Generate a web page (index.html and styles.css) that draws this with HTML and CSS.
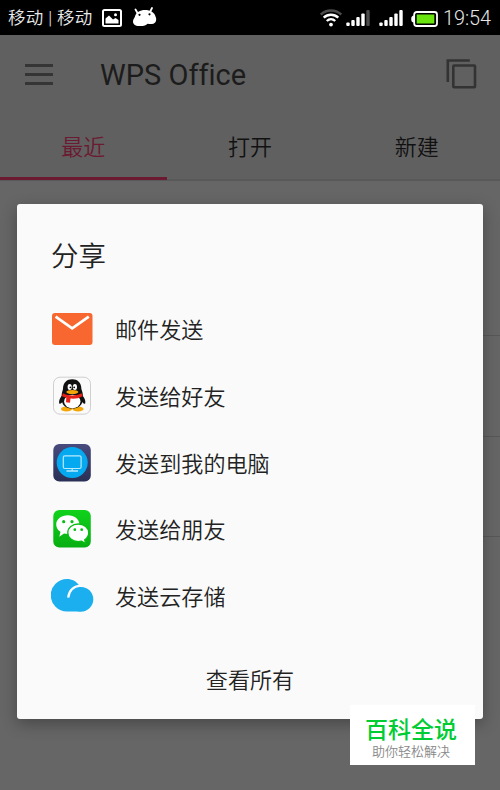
FILE: index.html
```html
<!DOCTYPE html>
<html lang="zh-CN">
<head>
    <meta charset="UTF-8">
    <meta name="viewport" content="width=device-width, initial-scale=1.0">
    <title>WPS Office</title>
    <link rel="stylesheet" href="styles.css">
</head>
<body>
    <div class="status-bar">
        <span class="carrier">移动 | 移动</span>
        <svg class="status-picture" width="20" height="18" viewBox="0 0 20 18">
            <rect x="1" y="1" width="18" height="16" rx="1.5" fill="none" stroke="#fff" stroke-width="2"/>
            <path d="M3.500 14.500V9.500L7 6.500l4 4 2.500-1.500 3 2v3.500z" fill="#fff"/>
            <circle cx="13.500" cy="5.800" r="1.500" fill="#fff"/>
        </svg>
        <svg class="status-robot" width="26" height="20" viewBox="0 0 26 20">
            <path d="M5.500 6 3.500 2.500M18 5l2-4" stroke="#fff" stroke-width="1.800" stroke-linecap="round"/>
            <path d="M2.800 10C4 5 8 3 13 3c5.500 0 9.500 2.500 10.500 6.500 1.500 3 .8 7-3.500 7.500-1.500.2-3 0-4.500-.2C14 18.800 11 19.200 7 19 3 19 1 17 1 14.500c0-1.500.8-3 1.800-4.500z" fill="#fff"/>
            <circle cx="7.500" cy="7.800" r="1.100"/>
            <circle cx="17.500" cy="7.300" r="1.100"/>
        </svg>
        <div class="status-right">
            <svg class="wifi" width="22" height="18" viewBox="0 0 22 18" fill="none" stroke-width="2.400">
                <path d="M.8 5.500C6.500.2 15.500.2 21.200 5.500" stroke="#4b4b4b"/>
                <path d="M3.700 8.600c4.200-3.900 10.400-3.900 14.600 0M6.800 12c2.400-2.300 6-2.300 8.400 0" stroke="#fff"/>
                <circle cx="11" cy="15.600" r="1.900" fill="#fff"/>
            </svg>
            <svg class="signal" width="24" height="18" viewBox="0 0 24 18" fill="#fff">
                <rect x=".3" y="13.500" width="3.400" height="3.500" rx="1"/>
                <rect x="5.300" y="11" width="3.400" height="6" rx="1"/>
                <rect x="10.300" y="8" width="3.400" height="9" rx="1"/>
                <rect x="15.300" y="4.500" width="3.400" height="12.500" rx="1"/>
                <rect x="20.300" y="1" width="3.400" height="16" rx="1" fill="#4b4b4b"/>
            </svg>
            <svg class="signal" width="24" height="18" viewBox="0 0 24 18" fill="#fff">
                <rect x=".3" y="13.500" width="3.400" height="3.500" rx="1"/>
                <rect x="5.300" y="11" width="3.400" height="6" rx="1"/>
                <rect x="10.300" y="8" width="3.400" height="9" rx="1"/>
                <rect x="15.300" y="4.500" width="3.400" height="12.500" rx="1"/>
                <rect x="20.300" y="1" width="3.400" height="16" rx="1"/>
            </svg>
            <svg class="battery" width="27" height="16" viewBox="0 0 27 16">
                <path d="M3 4.500Q.2 4.500.2 8T3 11.500z" fill="#fff"/>
                <rect x="3.200" y="1" width="22.800" height="14" rx="2.500" fill="none" stroke="#fff" stroke-width="1.800"/>
                <rect x="5.700" y="3.500" width="17.600" height="9" fill="#69e40f"/>
            </svg>
            <span class="clock">19:54</span>
        </div>
    </div>

    <header>
        <div class="toolbar">
            <div class="menu-toggle">
                <div class="bar"></div>
                <div class="bar"></div>
                <div class="bar"></div>
            </div>
            <h1>WPS Office</h1>
            <svg class="copy-icon" width="31" height="30" viewBox="0 0 31 30" fill="none" stroke="#333" stroke-width="2.600">
                <path d="M1.800 23V1.500h22"/>
                <rect x="7.300" y="6.500" width="21.700" height="21.700" rx=".8"/>
            </svg>
        </div>
        <nav class="tabs">
            <div class="tab active">最近</div>
            <div class="tab">打开</div>
            <div class="tab">新建</div>
        </nav>
    </header>

    <main>
        <div class="file-row first"></div>
        <div class="file-row"></div>
        <div class="file-row"></div>
    </main>

    <div class="dialog">
        <h2>分享</h2>
        <ul class="share-list">
            <li>
                <svg width="42" height="40" viewBox="0 0 42 40">
                    <rect x="1" y="4" width="40.500" height="32" rx="3" fill="#f7672f"/>
                    <path d="M4.600 7.700 21.200 19.300 37.800 7.700" fill="none" stroke="#fff" stroke-width="2.800"/>
                </svg>
                <span>邮件发送</span>
            </li>
            <li>
                <svg width="42" height="40" viewBox="0 0 42 40">
                    <rect x="2.500" y="1.200" width="37" height="37" rx="6.500" fill="#fafafa" stroke="#cfcfcf"/>
                    <ellipse cx="15.500" cy="33" rx="5.500" ry="2.600" fill="#f5a70a"/>
                    <ellipse cx="27" cy="33" rx="5.500" ry="2.600" fill="#f5a70a"/>
                    <path d="M12.500 18.500C9 21 7.500 25 8.300 27.500c1 1 3-1 4-3zM30 18.500c3.500 2.500 5 6.500 4.200 9-1 1-3-1-4-3z" fill="#111"/>
                    <path d="M12 13c0-6.500 4-9.700 9.200-9.700s9.200 3.200 9.200 9.700c2 5 2.100 10.500.6 14-1.800 4-5.500 5.500-9.800 5.500S13 31 11.400 27c-1.400-3.500-1.200-9 .6-14z" fill="#111"/>
                    <ellipse cx="21.300" cy="25.500" rx="8.200" ry="6.800" fill="#fff"/>
                    <path d="M11.800 17.200c6 3 13 3 18.700 0l1.200 3c-4 2.200-8.500 2.800-12.200 2.300l-.5 4.200-4-.5.300-4.600c-1.500-.3-3-.8-4.300-1.400z" fill="#e62117"/>
                    <ellipse cx="18.700" cy="11" rx="2.100" ry="2.900" fill="#fff"/>
                    <ellipse cx="23.900" cy="11" rx="2.100" ry="2.900" fill="#fff"/>
                    <circle cx="19.400" cy="11.300" r=".9"/>
                    <circle cx="23.200" cy="11.300" r=".9"/>
                    <ellipse cx="21.300" cy="16" rx="6" ry="2" fill="#f5a70a"/>
                </svg>
                <span>发送给好友</span>
            </li>
            <li>
                <svg width="42" height="40" viewBox="0 0 42 40">
                    <defs>
                        <linearGradient id="navy" x2="0" y2="1">
                            <stop offset="0" stop-color="#484b7d"/>
                            <stop offset="1" stop-color="#292f55"/>
                        </linearGradient>
                    </defs>
                    <rect x="2.300" y="1" width="37.500" height="37.500" rx="6" fill="url(#navy)"/>
                    <circle cx="21.200" cy="19.600" r="15.500" fill="#05a9ef"/>
                    <rect x="12.300" y="12.800" width="17.800" height="12.700" rx="1.500" fill="none" stroke="#b9e9ff" stroke-width="1.200"/>
                    <path d="M21.200 25.500v2M15.500 28h11.500" stroke="#b9e9ff" stroke-width="1.300"/>
                </svg>
                <span>发送到我的电脑</span>
            </li>
            <li>
                <svg width="42" height="40" viewBox="0 0 42 40">
                    <defs>
                        <linearGradient id="green" x2="0" y2="1">
                            <stop offset="0" stop-color="#10d21b"/>
                            <stop offset="1" stop-color="#08ae12"/>
                        </linearGradient>
                    </defs>
                    <rect x="2.300" y="1" width="37.500" height="37.500" rx="6" fill="url(#green)"/>
                    <path d="M16.800 6.300C10.500 6.300 5.200 10.200 5.200 15.500c0 3 1.700 5.700 4.300 7.300L8.300 27.800l4.700-3.300c1.200.3 2.500.5 3.800.5 6.400 0 11.600-4.200 11.600-9.500S23.200 6.300 16.800 6.300z" fill="#fff"/>
                    <path d="M27.200 15c-6 0-10.400 4-10.400 8.700 0 4.900 4.600 8.900 10.400 8.900 1.200 0 2.300-.2 3.400-.5l4 2.400-.9-3.800c2.400-1.600 4-4.100 4-7 0-4.800-4.700-8.700-10.500-8.700z" fill="#fff" stroke="#0abd15" stroke-width="1.300"/>
                    <g fill="#0bbd16">
                        <circle cx="12.700" cy="12.700" r="1.600"/>
                        <circle cx="21" cy="12.700" r="1.600"/>
                        <circle cx="23.800" cy="20.700" r="1.400"/>
                        <circle cx="30.700" cy="20.700" r="1.400"/>
                    </g>
                </svg>
                <span>发送给朋友</span>
            </li>
            <li>
                <svg class="cloud" width="43" height="40" viewBox="0 0 43 40">
                    <path d="M16 3c5 0 9.200 2.100 12.300 6.500l.2 1.500A12.400 12.400 0 0 1 30.300 35.500H16A16.200 16.200 0 0 1 16 3z" fill="#1bafef"/>
                    <circle cx="30" cy="23.200" r="12.300" fill="#1bafef"/>
                    <path d="M17.200 21.700C18 14.500 22.500 10.300 29.500 9.600" fill="none" stroke="#fafafa" stroke-width="2.300"/>
                </svg>
                <span>发送云存储</span>
            </li>
        </ul>
        <div class="view-all">查看所有</div>
    </div>

    <div class="badge">
        <div class="badge-title">百科全说</div>
        <div class="badge-text">助你轻松解决</div>
    </div>
</body>
</html>
```
FILE: styles.css
```css
* {
    box-sizing: border-box;
}

body {
    font-family: Roboto, "Noto Sans CJK SC", sans-serif;
    margin: 0;
    height: 790px;
    background-color: #666;
    color: #222;
    position: relative;
    overflow: hidden;
}

svg {
    display: block;
    flex: none;
}

.status-bar {
    display: flex;
    align-items: center;
    height: 35px;
    padding: 0 9px 0 8px;
    background-color: #000;
    color: #e8e8e8;
}

.carrier {
    width: 94px;
    font-size: 17.5px;
    font-weight: 350;
    line-height: 34px;
    letter-spacing: 0.3px;
    padding-top: 1px;
    white-space: pre;
}

.status-robot {
    margin-left: 10px;
    margin-top: -1px;
}

.status-right {
    display: flex;
    align-items: center;
    margin-left: auto;
}

.signal {
    margin-left: 4px;
}

.signal + .signal {
    margin-left: 9px;
}

.battery {
    margin: 2px 0 0 8px;
}

.clock {
    margin-left: 5px;
    font-size: 19.8px;
    font-weight: 300;
    line-height: 36px;
    padding-top: 3px;
}

header {
    height: 146px;
    background-color: #606060;
    border-bottom: 2px solid #585858;
}

.toolbar {
    display: flex;
    align-items: center;
    height: 79px;
    padding: 0 23px 0 25px;
}

.menu-toggle {
    width: 28px;
    margin-top: -1px;
}

.menu-toggle .bar {
    height: 3px;
    background-color: #353535;
    margin-bottom: 6px;
}

.menu-toggle .bar:last-child {
    margin-bottom: 0;
}

h1 {
    margin: 0 auto 0 47px;
    font-size: 29px;
    font-weight: 400;
    font-variant-ligatures: none;
    line-height: 36px;
    color: #1c1c1c;
}

.copy-icon {
    margin-top: -2px;
}

.tabs {
    display: flex;
    height: 66px;
}

.tab {
    flex: 1;
    height: 66px;
    font-size: 22px;
    font-weight: 350;
    line-height: 67px;
    text-align: center;
    color: #111;
}

.tab.active {
    color: #6b1a31;
    border-bottom: 3px solid #6b1a31;
}

.file-row {
    height: 100.5px;
    margin-left: 100px;
    border-bottom: 1px solid #585858;
}

.file-row.first {
    height: 155px;
}

.dialog {
    position: absolute;
    top: 204px;
    left: 17px;
    width: 466px;
    height: 515px;
    padding: 0 34px;
    background-color: #fafafa;
    border-radius: 3px;
    box-shadow: 0 5px 16px rgba(0, 0, 0, 0.3);
}

.dialog h2 {
    margin: 0;
    padding-top: 33px;
    font-size: 27.5px;
    font-weight: 350;
    line-height: 40px;
}

.share-list {
    list-style-type: none;
    margin: 19px 0 0;
    padding: 0;
}

.share-list li {
    display: flex;
    align-items: center;
    height: 66.7px;
    font-size: 22.1px;
    font-weight: 350;
    line-height: 32px;
}

.share-list span {
    margin-left: 22px;
    padding-top: 2px;
}

.share-list .cloud {
    margin-right: -1px;
}

.view-all {
    padding-top: 35px;
    font-size: 22.1px;
    font-weight: 350;
    line-height: 32px;
    text-align: center;
}

.badge {
    position: absolute;
    top: 705px;
    left: 350px;
    width: 125px;
    height: 60px;
    padding: 11px 3px 0 0;
    background-color: #fff;
    text-align: center;
}

.badge-title {
    font-size: 23px;
    font-weight: 500;
    line-height: 30px;
    color: #0c3;
}

.badge-text {
    font-size: 13px;
    font-weight: 350;
    line-height: 12px;
    color: #888;
}
```
